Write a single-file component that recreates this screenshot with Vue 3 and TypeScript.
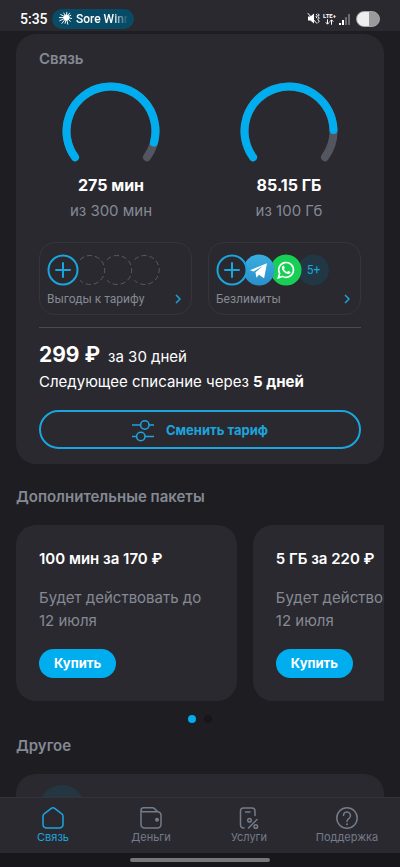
<script setup lang="ts">
interface Gauge {
  id: string
  value: string
  total: string
  share: number
}

interface Pack {
  id: string
  title: string
  until: string
}

interface Tab {
  id: string
  label: string
  active: boolean
}

const gauges: Gauge[] = [
  { id: 'minutes', value: '275 мин', total: 'из 300 мин', share: 275 / 300 },
  { id: 'traffic', value: '85.15 ГБ', total: 'из 100 Гб', share: 85.15 / 100 },
]

const packs: Pack[] = [
  { id: 'min100', title: '100 мин за 170 ₽', until: 'Будет действовать до 12 июля' },
  { id: 'gb5', title: '5 ГБ за 220 ₽', until: 'Будет действовать до 12 июля' },
]

const tabs: Tab[] = [
  { id: 'link', label: 'Связь', active: true },
  { id: 'money', label: 'Деньги', active: false },
  { id: 'services', label: 'Услуги', active: false },
  { id: 'support', label: 'Поддержка', active: false },
]

// The gauge is an arc of 252 degrees that opens downwards.
const CENTRE = 50
const RADIUS = 44.5
const START = 144
const SWEEP = 252

function arc(share: number): string {
  const point = (deg: number): string => {
    const a = (deg * Math.PI) / 180
    return `${(CENTRE + RADIUS * Math.cos(a)).toFixed(2)} ${(CENTRE + RADIUS * Math.sin(a)).toFixed(2)}`
  }
  const large = SWEEP * share > 180 ? 1 : 0
  return `M${point(START)} A${RADIUS} ${RADIUS} 0 ${large} 1 ${point(START + SWEEP * share)}`
}
</script>

<template>
  <div class="screen">
    <header class="status">
      <time class="clock">5:35</time>
      <div class="now-playing">
        <svg class="burst" viewBox="0 0 16 16" aria-hidden="true">
          <path d="M9 7 2.5 3.6M9 7 6 1.8M9 7 9.4 1M9 7 12.6 2M9 7 14 4.4M9 7 15 8M9 7 13.5 11.5M9 7 10.5 14.5M9 7 7.5 13.5M9 7 4 13.5M9 7 1.5 10.5M9 7 1 7" />
          <circle cx="9" cy="7" r="2.8" />
        </svg>
        <span class="track">Sore Winr</span>
      </div>
      <div class="indicators">
        <svg class="mute" viewBox="0 0 13 13" aria-hidden="true">
          <path class="solid" d="M1 4.6h2.4L7 1.4v10.2L3.4 8.6H1z" />
          <path class="line" d="M.8 1.2 10 11.6M9 2l1.2 1.4L9 4.8l1.2 1.5M11 1.6 12.2 3 11 4.5l1.2 1.6L11 7.6l1.2 1.6L11 10.8" />
        </svg>
        <div class="network">
          <span>LTE+</span>
          <svg class="arrows" viewBox="0 0 9 6" aria-hidden="true">
            <path d="M2.5.3v4.6M.8 3.3l1.7 1.9 1.7-1.9M6.5 5.7V1.1M4.8 2.7 6.5.8l1.7 1.9" />
          </svg>
        </div>
        <svg class="signal" viewBox="0 0 12 12" aria-hidden="true">
          <path class="on" d="M0 10h2v2H0zM3 7h2v5H3z" />
          <path class="off" d="M6 4h2v8H6zM9 1h2v11H9z" />
        </svg>
        <div class="battery"></div>
      </div>
    </header>

    <main class="content">
      <section class="card plan">
        <h2 class="heading">Связь</h2>

        <div class="gauges">
          <div v-for="g in gauges" :key="g.id" class="gauge">
            <svg class="dial" viewBox="0 0 100 81" aria-hidden="true">
              <path class="rest" :d="arc(1)" />
              <path class="used" :d="arc(g.share)" />
            </svg>
            <strong class="amount">{{ g.value }}</strong>
            <span class="total">{{ g.total }}</span>
          </div>
        </div>

        <div class="extras">
          <button type="button" class="extra">
            <svg class="bubbles" viewBox="0 0 116 32" aria-hidden="true">
              <g class="slot">
                <path d="M33 5.7A14.5 14.5 0 1 1 33 26.3" />
                <path d="M60 5.7A14.5 14.5 0 1 1 60 26.3" />
                <path d="M87.5 5.7A14.5 14.5 0 1 1 87.5 26.3" />
              </g>
              <circle class="ring" cx="16" cy="16" r="14.5" />
              <path class="ring" d="M9 16h14M16 9v14" />
            </svg>
            <span class="extra-row">
              <span>Выгоды к тарифу</span>
              <svg class="chevron" viewBox="0 0 6 10" aria-hidden="true"><path d="m1 1 4 4-4 4" /></svg>
            </span>
          </button>

          <button type="button" class="extra">
            <svg class="bubbles" viewBox="0 0 116 32" aria-hidden="true">
              <defs>
                <linearGradient id="tg" x1="0" y1="0" x2="0" y2="1">
                  <stop offset="0" stop-color="#39aee0" />
                  <stop offset="1" stop-color="#2a8fca" />
                </linearGradient>
              </defs>
              <circle class="more" cx="97.5" cy="16" r="15.5" />
              <text class="more-text" x="97.5" y="20">5+</text>
              <circle class="wa" cx="70" cy="16" r="15.5" />
              <path class="wa-line" d="M62.3 23.7l1.3-4.2a7.4 7.4 0 1 1 2.9 2.9z" />
              <path class="wa-phone" d="M67.2 11.7c-.4 0-1.4.7-1.3 2.2.2 2.9 3.5 5.9 6.4 6 1.5 0 2.3-1 2.2-1.9l-2.3-1.2-1.1 1.2c-1.6-.6-2.6-1.6-3.2-3l.9-1.1-.9-2.1c-.2-.1-.4-.1-.7-.1z" />
              <circle cx="43" cy="16" r="15.5" fill="url(#tg)" />
              <path class="plane" d="m34 16.2 17-7-2.9 15-5.2-3.5-2.5 3-.9-5.5 7.4-6.2-9.2 5.5z" />
              <circle class="ring filled" cx="16" cy="16" r="14.5" />
              <path class="ring" d="M9 16h14M16 9v14" />
            </svg>
            <span class="extra-row">
              <span>Безлимиты</span>
              <svg class="chevron" viewBox="0 0 6 10" aria-hidden="true"><path d="m1 1 4 4-4 4" /></svg>
            </span>
          </button>
        </div>

        <div class="billing">
          <p class="price"><strong>299 ₽</strong><span>за 30 дней</span></p>
          <p class="next">Следующее списание через <b>5 дней</b></p>
        </div>

        <button type="button" class="change">
          <svg class="sliders" viewBox="0 0 22 24" aria-hidden="true">
            <path d="M0 7h8.5M17 7h5M0 18.5h4.5M13 18.5h9" />
            <circle cx="12.8" cy="7" r="4.2" />
            <circle cx="8.8" cy="18.5" r="4.2" />
          </svg>
          <span>Сменить тариф</span>
        </button>
      </section>

      <section class="packs">
        <h2 class="heading">Дополнительные пакеты</h2>
        <div class="carousel">
          <article v-for="p in packs" :key="p.id" class="card pack">
            <h3>{{ p.title }}</h3>
            <p>{{ p.until }}</p>
            <button type="button" class="buy">Купить</button>
          </article>
        </div>
        <div class="dots" aria-hidden="true"><i class="dot current"></i><i class="dot"></i></div>
      </section>

      <section class="other">
        <h2 class="heading">Другое</h2>
        <div class="card other-card"><div class="badge"></div></div>
      </section>
    </main>

    <nav class="tabs">
      <a v-for="t in tabs" :key="t.id" href="#" class="tab" :class="{ active: t.active }">
        <svg class="tab-icon" viewBox="0 0 24 24" aria-hidden="true">
          <path v-if="t.id === 'link'" d="M2 10.2c0-1 .5-1.8 1.2-2.4L10.3 2.3a2.8 2.8 0 0 1 3.4 0l7.1 5.5c.7.6 1.2 1.4 1.2 2.4v8.3a3.5 3.5 0 0 1-3.5 3.5h-13A3.5 3.5 0 0 1 2 18.5z" />
          <g v-else-if="t.id === 'money'">
            <path d="M2 4.6V18.5A3.5 3.5 0 0 0 5.5 22h13a3.5 3.5 0 0 0 3.5-3.5V9.3a3.5 3.5 0 0 0-3.5-3.5H4.3A2 2 0 0 1 2 4.2 2.6 2.6 0 0 1 4.6 1.8H13.5a3 3 0 0 1 2 .8l3.3 3.2" />
            <circle class="fill" cx="18" cy="13.8" r="2" />
          </g>
          <g v-else-if="t.id === 'services'">
            <path d="M7 22H6.5A3 3 0 0 1 3.5 19V5A3 3 0 0 1 6.5 2H15A3 3 0 0 1 18 5v4.5M8.5 6h4.5M20 13.5 11.5 22" />
            <circle cx="12.5" cy="14.2" r="1.8" />
            <circle cx="18.8" cy="20.5" r="1.8" />
          </g>
          <g v-else>
            <circle cx="12" cy="12" r="10.2" />
            <path d="M8.5 9.5a3.5 3.5 0 1 1 5.5 2.8c-1.3.9-2 1.5-2 2.9v.3" />
            <circle class="fill" cx="12" cy="18.2" r="1" />
          </g>
        </svg>
        <span>{{ t.label }}</span>
      </a>
    </nav>

    <footer class="gesture"><div class="handle"></div></footer>
  </div>
</template>

<style>
body {
  background: #1e1d22;
}
</style>

<style scoped>
.screen {
  --surface: #2a292f;
  --accent: #00aeef;
  --line-accent: #1ba5df;
  --muted: #858994;
  display: flex;
  flex-direction: column;
  height: 100vh;
  color: #fff;
  background: #1e1d22;
  font-family: Inter, "Noto Sans", sans-serif;
  font-size: 15px;
}

h2,
h3,
p {
  margin: 0;
}

button {
  font: inherit;
  cursor: pointer;
}

.status {
  display: flex;
  align-items: center;
  flex: none;
  box-sizing: border-box;
  height: 31px;
  padding: 6px 20px 0;
  background: var(--surface);
}

.clock {
  width: 32px;
  font: 500 14px/20px Roboto, sans-serif;
}

.now-playing {
  display: flex;
  align-items: center;
  gap: 3px;
  box-sizing: border-box;
  width: 82px;
  height: 20px;
  padding: 0 6px;
  overflow: hidden;
  border-radius: 10px;
  background: #084b66;
}

.burst {
  flex: none;
  width: 15px;
  height: 15px;
  fill: #fff;
  stroke: #fff;
  stroke-width: 1;
}

.track {
  overflow: hidden;
  white-space: nowrap;
  font: 500 12px/20px Roboto, sans-serif;
  mask-image: linear-gradient(90deg, #000 70%, transparent);
}

.indicators {
  display: flex;
  align-items: center;
  gap: 3px;
  margin-left: auto;
}

.mute {
  width: 13px;
  height: 13px;
}

.mute .solid {
  fill: #fff;
}

.mute .line {
  fill: none;
  stroke: #fff;
  stroke-width: 1;
}

.network {
  display: flex;
  flex-direction: column;
  align-items: center;
  font: 700 6px/7px Roboto, sans-serif;
}

.arrows {
  width: 9px;
  height: 6px;
  fill: none;
  stroke: #fff;
  stroke-width: 1;
}

.signal {
  width: 12px;
  height: 12px;
  margin-right: 2px;
}

.signal .on {
  fill: #fff;
}

.signal .off {
  fill: #6b6a70;
}

.battery {
  box-sizing: border-box;
  width: 24px;
  height: 16px;
  border: 1px solid #a5a5a8;
  border-radius: 8px;
  background: linear-gradient(90deg, #eee 56%, #9a9a9d 56%);
}

.content {
  flex: 1;
  min-height: 0;
  overflow: hidden;
  padding: 3px 16px 0;
}

.card {
  border-radius: 20px;
  background: var(--surface);
}

.heading {
  color: var(--muted);
  font-size: 15px;
  font-weight: 600;
  line-height: 22px;
}

.plan {
  padding: 14px 23px 15px;
}

.gauges {
  display: grid;
  grid-template-columns: 1fr 1fr;
  gap: 34px;
  padding-top: 11px;
}

.gauge {
  display: flex;
  flex-direction: column;
  align-items: center;
  line-height: 26px;
}

.dial {
  width: 100px;
  height: 81px;
  margin-bottom: 10px;
  fill: none;
  stroke-width: 8;
  stroke-linecap: round;
}

.rest {
  stroke: #54565f;
}

.used {
  stroke: var(--accent);
}

.amount {
  font-size: 16px;
  font-weight: 700;
}

.total {
  color: var(--muted);
}

.extras {
  display: grid;
  grid-template-columns: 1fr 1fr;
  gap: 16px;
  padding: 18px 0 12px;
}

.extra {
  display: flex;
  flex-direction: column;
  gap: 5px;
  padding: 11px 10px 7px 7px;
  color: var(--muted);
  border: 1px solid #36353b;
  border-radius: 16px;
  background: none;
}

.bubbles {
  width: 116px;
  height: 32px;
}

.slot {
  fill: none;
  stroke: #5a5a61;
  stroke-width: 1;
  stroke-dasharray: 5 3;
}

.ring {
  fill: none;
  stroke: var(--line-accent);
  stroke-width: 2;
  stroke-linecap: round;
}

.filled {
  fill: var(--surface);
}

.more {
  fill: #213743;
}

.more-text {
  fill: var(--line-accent);
  font: 400 12px Roboto, sans-serif;
  text-anchor: middle;
}

.wa {
  fill: #18cf55;
}

.wa-line {
  fill: none;
  stroke: #fff;
  stroke-width: 1.6;
}

.wa-phone,
.plane {
  fill: #fff;
}

.extra-row {
  display: flex;
  align-items: center;
  justify-content: space-between;
  align-self: stretch;
  font: 400 12px/16px Roboto, sans-serif;
}

.chevron {
  width: 6px;
  height: 10px;
  fill: none;
  stroke: var(--line-accent);
  stroke-width: 1.5;
}

.billing {
  padding: 13px 0 17px;
  border-top: 1px solid #4b4a50;
}

.price {
  display: flex;
  align-items: baseline;
  gap: 8px;
  line-height: 28px;
}

.price strong {
  font-size: 21px;
  font-weight: 700;
}

.next {
  line-height: 22px;
}

.change {
  display: flex;
  align-items: center;
  justify-content: center;
  gap: 12px;
  box-sizing: border-box;
  width: 100%;
  height: 39px;
  padding: 0;
  color: var(--line-accent);
  border: 2px solid var(--line-accent);
  border-radius: 20px;
  background: none;
  font-size: 13px;
  font-weight: 700;
}

.sliders {
  width: 22px;
  height: 24px;
  fill: none;
  stroke: currentColor;
  stroke-width: 1.5;
}

.packs {
  padding-top: 22px;
}

.carousel {
  display: flex;
  gap: 16px;
  overflow: hidden;
  padding-top: 17px;
}

.pack {
  flex: none;
  box-sizing: border-box;
  width: 60%;
  padding: 23px;
}

.pack h3 {
  font-size: 15px;
  font-weight: 600;
  line-height: 22px;
}

.pack p {
  padding: 16px 0 17px;
  color: var(--muted);
  line-height: 23px;
}

.buy {
  display: block;
  height: 29px;
  padding: 0 15px 2px;
  color: #fff;
  border: 0;
  border-radius: 15px;
  background: var(--accent);
  font-size: 13px;
  font-weight: 700;
}

.dots {
  display: flex;
  justify-content: center;
  gap: 8px;
  padding: 14px 0 12px;
}

.dot {
  width: 8px;
  height: 8px;
  border-radius: 50%;
  background: #17161a;
}

.dot.current {
  background: var(--accent);
}

.other-card {
  margin-top: 17px;
  padding: 11px 23px;
}

.badge {
  width: 46px;
  height: 46px;
  border-radius: 50%;
  background: #243641;
}

.tabs {
  display: grid;
  grid-template-columns: repeat(4, 1fr);
  flex: none;
  box-sizing: border-box;
  height: 56px;
  padding: 8px 4px 0;
  border-top: 1px solid #34333a;
  background: var(--surface);
}

.tab {
  display: flex;
  flex-direction: column;
  align-items: center;
  color: #747b8a;
  font-size: 11px;
  line-height: 15px;
  text-decoration: none;
}

.tab.active {
  color: var(--line-accent);
}

.tab-icon {
  width: 24px;
  height: 24px;
  fill: none;
  stroke: currentColor;
  stroke-width: 1.5;
  stroke-linecap: round;
  stroke-linejoin: round;
}

.fill {
  fill: currentColor;
  stroke: none;
}

.gesture {
  display: flex;
  justify-content: center;
  flex: none;
  box-sizing: border-box;
  height: 14px;
  padding-top: 5px;
  background: #18171b;
}

.handle {
  width: 35%;
  height: 4px;
  border-radius: 2px;
  background: #77767a;
}
</style>
